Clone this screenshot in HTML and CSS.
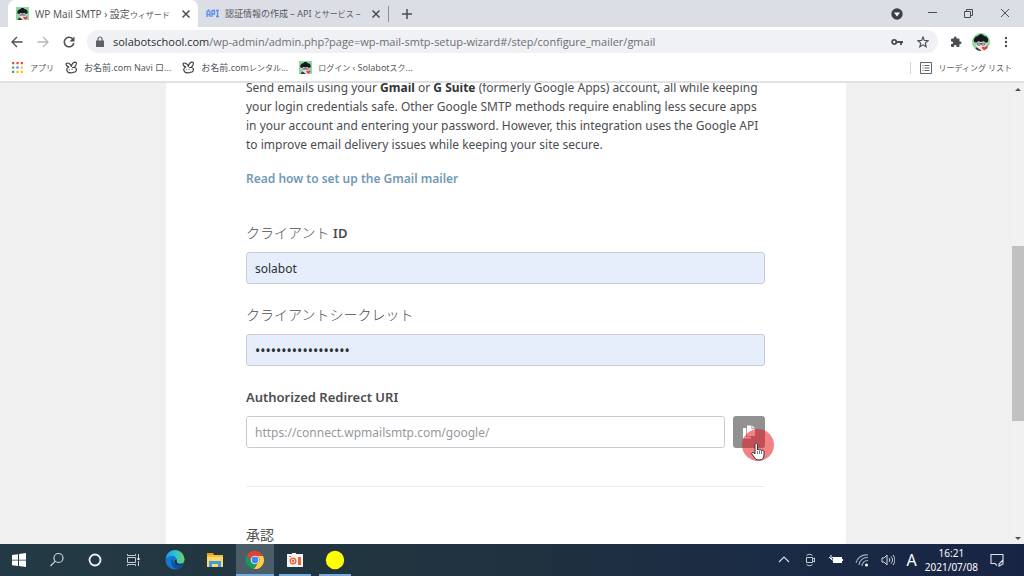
FILE: index.html
```html
<!DOCTYPE html>
<html lang="ja">
<head>
<meta charset="utf-8">
<meta name="viewport" content="width=device-width, initial-scale=1">
<title>WP Mail SMTP › 設定ウィザード</title>
<link rel="stylesheet" href="styles.css">
</head>
<body>
<svg class="defs" aria-hidden="true">
  <symbol id="avatar" viewBox="0 0 24 24">
    <path fill="#8fd6a0" d="M0 0h24v24H0z"/>
    <path fill="#ece7e5" d="M5 10h14v6l-3 4 2 4H6l1-4-2-4z"/>
    <path fill="#151a1c" d="M3 12c-2-4 2-8 5-8 1-3 7-3 8 0 4 0 7 4 5 8l-3 1-2-2-4 1-4-1-2 2z"/>
    <path fill="none" stroke="#444" stroke-width="1" d="M7 13.500h4V16H7zM13 13.500h4V16h-4zM11 14h2"/>
    <path fill="#30383c" d="M3 24l3-5 6 4v1z"/>
    <path fill="#ee3541" d="M14 18l3 1 3-2 1 3-4 4-4-4z"/>
  </symbol>
  <symbol id="rabbit" viewBox="0 0 24 24">
    <path fill="none" stroke="#3c4043" stroke-width="2.200" stroke-linejoin="round" stroke-linecap="round" d="M7 11C2 10 1 5 3 4s7 1 9 6c0-5 4-8 7-8s3 5-2 10c4 0 5 4 3 7s-4 1-5 2-8 2-10-1c-3-3-2-7 2-9z"/>
    <path fill="none" stroke="#3c4043" stroke-width="2" stroke-linecap="round" d="M8 16h.1M13 15h.1M16 12l-2 0"/>
  </symbol>
  <symbol id="cross" viewBox="0 0 10 10">
    <path fill="none" stroke="currentColor" stroke-width="1.500" d="M1.500 1.500l7 7M8.500 1.500l-7 7"/>
  </symbol>
</svg>

<header class="browser">
  <div class="tabs">
    <div class="tab tab-active">
      <svg class="favicon"><use href="#avatar"/></svg>
      <span class="tab-title">WP Mail SMTP › 設定<span class="kana">ウィザード</span></span>
      <button class="icon-btn" aria-label="タブを閉じる"><svg class="close"><use href="#cross"/></svg></button>
    </div>
    <div class="tab tab-idle">
      <svg class="favicon" viewBox="0 0 13 13"><path fill="none" stroke="#5b8def" stroke-width="1.300" d="M1 10V5l1.500-2L4 5v5M1 7.500h3M6 10V3.500h2.500v3.500H6M10 3.500h3M11.500 3.500v6M10 9.500h3"/></svg>
      <span class="tab-title small">認証情報の作成 – API <span class="kana">とサービス</span> –</span>
      <button class="icon-btn" aria-label="タブを閉じる"><svg class="close"><use href="#cross"/></svg></button>
    </div>
    <span class="tab-divider"></span>
    <button class="icon-btn new-tab" aria-label="新しいタブ"><svg viewBox="0 0 12 12"><path stroke="currentColor" stroke-width="1.500" d="M6 1v10M1 6h10"/></svg></button>
    <div class="window-controls">
      <button class="icon-btn" aria-label="タブを検索"><svg viewBox="0 0 12 12"><circle cx="6" cy="6" r="5.700" fill="#3c4043"/><path fill="#fff" d="M3 4.500h6L6 8.500z"/></svg></button>
      <button class="icon-btn" aria-label="最小化"><svg viewBox="0 0 12 12"><path stroke="currentColor" d="M1 4.500h9"/></svg></button>
      <button class="icon-btn" aria-label="元に戻す"><svg viewBox="0 0 12 12"><path fill="none" stroke="currentColor" d="M1.500 3.500h6v6h-6zM3.500 3.500v-2h6v6h-2"/></svg></button>
      <button class="icon-btn" aria-label="閉じる"><svg viewBox="0 0 12 12"><path stroke="currentColor" d="M2 1l8 8M10 1l-8 8"/></svg></button>
    </div>
  </div>

  <div class="toolbar">
    <div class="nav-buttons">
      <button class="icon-btn" aria-label="戻る"><svg viewBox="0 0 12 12"><path fill="none" stroke="currentColor" stroke-width="1.300" d="M11.500 6H1.500M6 1L1 6l5 5"/></svg></button>
      <button class="icon-btn pale" aria-label="進む"><svg viewBox="0 0 12 12"><path fill="none" stroke="currentColor" stroke-width="1.300" d="M.5 6h10M6 1l5 5-5 5"/></svg></button>
      <button class="icon-btn" aria-label="再読み込み"><svg viewBox="0 0 12 12"><path fill="none" stroke="currentColor" stroke-width="1.500" d="M10 3.200A4.800 4.800 0 1 0 10.800 7"/><path fill="currentColor" d="M11.500.5v5h-5z"/></svg></button>
    </div>
    <div class="omnibox">
      <svg class="lock" viewBox="0 0 10 12"><path fill="#5f6368" d="M1 4.500h8V11H1z"/><path fill="none" stroke="#5f6368" stroke-width="1.200" d="M3 5V3a2 2 0 0 1 4 0v2"/></svg>
      <span class="url"><span class="host">solabotschool.com</span>/wp-admin/admin.php?page=wp-mail-smtp-setup-wizard#/step/configure_mailer/gmail</span>
      <button class="icon-btn" aria-label="パスワード"><svg viewBox="0 0 12 12"><circle cx="3.200" cy="6" r="2.100" fill="none" stroke="currentColor" stroke-width="1.800"/><path fill="none" stroke="currentColor" stroke-width="1.800" d="M5.500 6H12M10 6v3"/></svg></button>
      <button class="icon-btn" aria-label="ブックマーク"><svg viewBox="0 0 12 12"><path fill="none" stroke="currentColor" stroke-width="1.100" d="M6 1l1.400 3.400 3.800.3-2.900 2.400.9 3.700L6 8.800l-3.200 2 .9-3.700L.8 4.700l3.800-.3z"/></svg></button>
    </div>
    <button class="icon-btn" aria-label="拡張機能"><svg viewBox="0 0 24 24"><path fill="currentColor" d="M20.500 11H19V7a2 2 0 0 0-2-2h-4V3.500a2.500 2.500 0 0 0-5 0V5H4a2 2 0 0 0-2 2v3.800h1.500a2.700 2.700 0 0 1 0 5.400H2V20a2 2 0 0 0 2 2h3.800v-1.500a2.700 2.700 0 0 1 5.400 0V22H17a2 2 0 0 0 2-2v-4h1.500a2.500 2.500 0 0 0 0-5z"/></svg></button>
    <button class="icon-btn profile" aria-label="プロフィール"><svg><use href="#avatar"/></svg></button>
    <button class="icon-btn" aria-label="メニュー"><svg viewBox="0 0 12 12"><g fill="currentColor"><circle cx="6" cy="2" r="1.200"/><circle cx="6" cy="6" r="1.200"/><circle cx="6" cy="10" r="1.200"/></g></svg></button>
  </div>

  <nav class="bookmarks">
    <a class="bookmark kana" href="#"><svg viewBox="0 0 12 12"><path fill="#ea4335" d="M1 1h2v2H1zM5 1h2v2H5zM9 1h2v2H9z"/><path fill="#34a853" d="M1 5h2v2H1zM1 9h2v2H1z"/><path fill="#4285f4" d="M5 5h2v2H5z"/><path fill="#fbbc04" d="M9 5h2v2H9zM5 9h2v2H5zM9 9h2v2H9z"/></svg>アプリ</a>
    <a class="bookmark" href="#"><svg><use href="#rabbit"/></svg><span>お名前.com Navi ロ...</span></a>
    <a class="bookmark" href="#"><svg><use href="#rabbit"/></svg><span>お名前.com<span class="kana">レンタル</span>...</span></a>
    <a class="bookmark" href="#"><svg><use href="#avatar"/></svg><span><span class="kana">ログイン</span> ‹ Solabot<span class="kana">スク</span>...</span></a>
    <a class="bookmark reading kana" href="#"><svg viewBox="0 0 12 12"><path fill="none" stroke="#5f6368" d="M.5.500h11v11H.5zM2.500 3.500h1M2.500 6h1M2.500 8.500h1M4.500 3.500h5M4.500 6h5M4.500 8.500h5"/></svg>リーディング リスト</a>
  </nav>
</header>

<div class="viewport">
  <main class="page">
    <form class="card">
      <p class="intro">Send emails using your <strong>Gmail</strong> or <strong>G Suite</strong> (formerly Google Apps) account, all while keeping<br>your login credentials safe. Other Google SMTP methods require enabling less secure apps<br>in your account and entering your password. However, this integration uses the Google API<br>to improve email delivery issues while keeping your site secure.</p>
      <a class="doc-link" href="#">Read how to set up the Gmail mailer</a>
      <div class="field">
        <label for="client-id">クライアント <b>ID</b></label>
        <input class="filled" id="client-id" type="text" value="solabot">
      </div>
      <div class="field">
        <label for="client-secret">クライアントシークレット</label>
        <input class="filled" id="client-secret" type="password" value="abcdefghijklmnopqr">
      </div>
      <div class="field">
        <label for="redirect-uri"><b>Authorized Redirect URI</b></label>
        <div class="copy-row">
          <input id="redirect-uri" type="text" readonly value="https://connect.wpmailsmtp.com/google/">
          <button class="copy" type="button" aria-label="Copy">
            <svg class="copy-icon" viewBox="0 0 14 14"><path fill="#fff" d="M5 .5h4.500V4H13v7H5z"/><path fill="#fff" d="M10.300.5L13 3.200h-2.700zM1 3h3.200v8.800H9v1.700H1z"/></svg>
            <span class="click-spot"></span>
            <svg class="pointer" viewBox="0 0 14 18"><path fill="#fff" stroke="#333" d="M4 11V2c0-2 2.500-2 2.500 0v5c.5-1 2-.8 2 .3.500-1 2-.7 2 .4.600-.8 2.500-.4 2.500 1V12c0 3-1.500 5-5 5-3 0-4-1.500-5-3L.8 11C.3 9.500 2 9 3 10z"/><path stroke="#555" stroke-width=".8" d="M6.500 8v3M8.500 8v3M10.500 8v3"/></svg>
          </button>
        </div>
      </div>
      <hr>
      <h2>承認</h2>
    </form>
  </main>
  <div class="scrollbar" aria-hidden="true">
    <svg viewBox="0 0 12 12"><path fill="#505050" d="M3 8l3-3 3 3z"/></svg>
    <span class="thumb"></span>
    <svg viewBox="0 0 12 12"><path fill="#505050" d="M3 5l3 3 3-3z"/></svg>
  </div>
</div>

<footer class="taskbar">
  <div class="system-tasks">
    <button class="task" aria-label="スタート"><svg viewBox="0 0 20 20"><path fill="#fff" d="M3 5l6-.8v5.500H3zM10 4l7-1v6.700h-7zM3 10.500h6V16l-6-.8zM10 10.500h7V17l-7-1z"/></svg></button>
    <button class="task" aria-label="検索"><svg viewBox="0 0 20 20"><circle cx="11.500" cy="8" r="4.500" fill="none" stroke="#cfd6da" stroke-width="1.200"/><path stroke="#cfd6da" stroke-width="1.200" d="M8.300 11.200L3.500 16"/></svg></button>
    <button class="task" aria-label="Cortana"><svg viewBox="0 0 20 20"><circle cx="10" cy="10" r="5.500" fill="none" stroke="#f2f4f5" stroke-width="1.800"/></svg></button>
    <button class="task" aria-label="タスク ビュー"><svg viewBox="0 0 20 20"><path fill="none" stroke="#c5cdd1" d="M4.500 7.500h8v5h-8zM4.500 4v1.500h8V4M4.500 16v-1.500h8V16M15.500 4v4M15.500 11v5"/><path fill="#fff" d="M14.500 8h2v2h-2z"/></svg></button>
  </div>
  <div class="app-tasks">
    <button class="task" aria-label="Edge"><svg viewBox="0 0 20 20">
      <defs><linearGradient id="edge-top" x1="0" x2="1"><stop offset="0" stop-color="#2196e0"/><stop offset=".55" stop-color="#35bfd5"/><stop offset="1" stop-color="#6bd84c"/></linearGradient></defs>
      <circle cx="10" cy="10" r="9.500" fill="#1578cc"/>
      <path fill="url(#edge-top)" d="M.6 9C2-3 18-3 19.500 9c.2 4-3.500 5.500-7.500 4-1-.5 0-1 0-2.500C12 7 9 5.500 6 6 3 6.300 1.200 8 .6 9z"/>
      <path fill="#0d509c" d="M7.500 8.500C5 12 7 18 12 19c3-.3 5-2 6.300-4.300C13 17 7 14 7.500 8.500z"/>
      <path fill="#20333f" d="M11.800 11c-1 1.500 2 4 7.200 2.500l-.8 1.300C14 16.500 9 14.500 9.500 11c.2-1.500 2.500-1.500 2.300 0z"/></svg></button>
    <button class="task" aria-label="エクスプローラー"><svg viewBox="0 0 20 20"><path fill="#e5a21b" d="M2 3h6l1 2H2z"/><path fill="#ffd76a" d="M2 5h16v12H2z"/><path fill="#f6bd3b" d="M2 5h16v2H2z"/><path fill="#3e9ddd" d="M4 17v-6h12v6h-3v-3H7v3z"/></svg></button>
    <button class="task running current" aria-label="Chrome"><svg viewBox="0 0 20 20"><path fill="#db4437" d="M2 5.500A9 9 0 0 1 18 6h-8a4 4 0 0 0-4 5z"/><path fill="#0f9d58" d="M2 5.500l4.500 7A4 4 0 0 0 11 14l-2 5A9 9 0 0 1 2 5.500z"/><path fill="#ffcd40" d="M18 6a9 9 0 0 1-9 13l4-6a4 4 0 0 0-1-7z"/><circle cx="10" cy="10" r="4.300" fill="#fff"/><circle cx="10" cy="10" r="3.400" fill="#4285f4"/></svg></button>
    <button class="task running" aria-label="画面録画"><svg viewBox="0 0 20 20"><path fill="#f4f4f4" d="M2 4h5V3h4v1h7v13H2z"/><circle cx="8" cy="11" r="2.800" fill="none" stroke="#e56a38" stroke-width="1.400"/><circle cx="8" cy="11" r="1.200" fill="#e56a38"/><path fill="#e56a38" d="M13 7h3v8h-3zM4 6h2v1H4z"/></svg></button>
    <button class="task running" aria-label="ポインター"><svg viewBox="0 0 20 20"><circle cx="10" cy="10" r="9.200" fill="#ff0"/></svg></button>
  </div>

  <div class="tray">
    <svg viewBox="0 0 14 14"><path fill="none" stroke="#d5dae2" stroke-width="1.200" d="M2 9l5-5 5 5"/></svg>
    <svg viewBox="0 0 14 14"><path fill="none" stroke="#c6ccd5" d="M3.500 4.500h6v5h-6zM9.500 6l2-1v4l-2-1M3.500 2.500C5 1 8 1 9.500 2.500M3.500 11.500c1.500 1.500 4.500 1.500 6 0"/></svg>
    <svg viewBox="0 0 14 14"><path fill="#fff" d="M4 4h9v6H4zM13 6h1v2h-1z"/><path fill="none" stroke="#fff" d="M0 4l2 2 2-2M2 2v4l3 2"/></svg>
    <svg viewBox="0 0 14 14"><path fill="none" stroke="#aab2bf" stroke-width="1.100" d="M1 10C2 5 7 1 13 2M4 12c0-4 4-8 9-7.500M7 13c0-3 3-6 6-5.500"/><circle cx="11.500" cy="12" r="1.500" fill="#fff"/></svg>
    <svg viewBox="0 0 14 14"><path fill="none" stroke="#d5dae2" d="M1 5h2l3-3v10L3 9H1zM8 5c1 1 1 3 0 4M10 3.500c2 2 2 5 0 7M12 2c2.500 3 2.500 7 0 10"/></svg>
    <div class="status">
      <span class="ime">A</span>
      <div class="clock"><time>16:21</time><time>2021/07/08</time></div>
    </div>
    <svg viewBox="0 0 14 14"><path fill="none" stroke="#e0e4ea" stroke-width="1.100" d="M13 7V1.500H1v9h4l2 2M13 7l-4 4v2l4-2z"/></svg>
  </div>
</footer>
</body>
</html>
```
FILE: styles.css
```css
* { box-sizing: border-box; }

body {
  margin: 0;
  height: 100vh;
  display: flex;
  flex-direction: column;
  overflow: hidden;
  background: #fff;
  color: #4b4d4f;
  font-family: "Noto Sans", "Noto Sans CJK JP", sans-serif;
  font-size: 12px;
}

button, input { font: inherit; }
svg { display: block; flex: none; }
a { text-decoration: none; }
.defs { position: absolute; width: 0; height: 0; }

.icon-btn {
  flex: none;
  display: grid;
  place-items: center;
  padding: 0;
  border: 0;
  background: none;
  color: #4a4d51;
}
.icon-btn svg { width: 12px; height: 12px; }
.icon-btn .close { width: 10px; height: 10px; }
.icon-btn.pale { color: #b5b7ba; }

/* Browser frame */
.browser {
  flex: none;
  border-bottom: 2px solid #dfe1e4;
  color: #55585c;
  font-size: 10px;
}
.small { font-size: 9px; }
.kana { font-size: 8px; }

.tabs {
  display: flex;
  align-items: center;
  height: 27px;
  padding-left: 8px;
  background: #dcdee6;
}
.tab {
  display: flex;
  align-items: center;
  gap: 6px;
  height: 27px;
  width: 190px;
  padding: 0 7px 0 8px;
}
.tab-active { background: #fff; border-radius: 7px 7px 0 0; }
.favicon { width: 13px; height: 13px; }
.tab-title { flex: 1; min-width: 0; white-space: nowrap; }
.tab-divider { width: 1px; height: 16px; background: #8d9096; }
.new-tab { margin-left: 12px; }
.window-controls { display: flex; gap: 24px; margin-left: auto; padding-right: 13px; }

.toolbar {
  display: flex;
  align-items: center;
  gap: 12px;
  height: 29px;
  padding: 0 12px 0 11px;
}
.nav-buttons { display: flex; gap: 14px; }
.omnibox {
  flex: 1;
  min-width: 0;
  display: flex;
  align-items: center;
  gap: 14px;
  height: 23px;
  padding: 0 9px 0 8px;
  border-radius: 12px;
  background: #f0f1f4;
  font-family: "Open Sans", "Noto Sans", sans-serif;
  font-size: 11px;
}
.lock { width: 10px; height: 12px; margin-right: -6px; }
.url { flex: 1; min-width: 0; white-space: nowrap; color: #6b6e72; }
.host { color: #2c2f33; }
.toolbar .profile svg { width: 18px; height: 18px; border-radius: 50%; }
.toolbar .profile { margin: 0 -2px; }

.bookmarks {
  display: flex;
  align-items: center;
  gap: 11px;
  height: 25px;
  padding: 0 12px 2px 11px;
}
.bookmark {
  display: flex;
  align-items: center;
  gap: 6px;
  color: #55585c;
  font-size: 9px;
  white-space: nowrap;
}
.bookmark.kana { font-size: 8px; }
.bookmark svg { width: 13px; height: 13px; }
.reading { margin-left: auto; padding-left: 9px; border-left: 1px solid #d5d7da; }
.reading svg { width: 12px; height: 12px; }

/* Web page */
.viewport { flex: 1; min-height: 0; display: flex; }
.page {
  flex: 1;
  min-width: 0;
  overflow: hidden;
  background: #f0f0f0;
}
.card {
  width: 68%;
  max-width: 680px;
  margin: -5px auto 0;
  padding: 0 81px 40px 80px;
  background: #fff;
}
.intro { margin: 0 0 15px; line-height: 19px; white-space: nowrap; }
.intro strong { color: #333537; }
.doc-link { display: block; color: #7299b6; font-weight: 600; line-height: 20px; }
.field { margin-top: 21px; }
.doc-link + .field { margin-top: 34px; }
.field label {
  display: block;
  height: 20px;
  margin-bottom: 9px;
  font-size: 14px;
  font-weight: 300;
  line-height: 20px;
}
.field b { font-weight: 600; font-size: 13px; }
.field input {
  display: block;
  width: 100%;
  height: 32px;
  padding: 0 8px;
  border: 1px solid #c8ccd2;
  border-radius: 3px;
  background: #fff;
  color: #96989b;
}
.field .filled { background: #e6eefb; color: #2c2f33; }
.field input[type="password"] { font-size: 14px; }
.copy-row { display: flex; gap: 8px; }
.copy-row input { flex: 1; min-width: 0; }
.copy {
  position: relative;
  flex: none;
  display: grid;
  place-items: center;
  width: 32px;
  height: 32px;
  padding: 0;
  border: 0;
  border-radius: 3px;
  background: #919191;
}
.copy-icon { width: 14px; height: 14px; }
.click-spot {
  position: absolute;
  left: 9px;
  top: 13px;
  width: 32px;
  height: 32px;
  border-radius: 50%;
  background: rgba(232, 28, 38, .55);
}
.pointer { position: absolute; left: 18px; top: 27px; width: 14px; height: 18px; }
hr { margin: 38px 0; border: 0; border-top: 1px solid #ececec; }
h2 { margin: 0; font-size: 14px; font-weight: 400; line-height: 20px; }

.scrollbar {
  flex: none;
  display: flex;
  flex-direction: column;
  justify-content: space-between;
  width: 12px;
  background: #f1f1f1;
}
.scrollbar svg { width: 12px; height: 12px; }
.thumb { height: 38%; margin-top: 40px; background: #c1c1c1; }

/* Desktop taskbar */
.taskbar {
  flex: none;
  display: flex;
  gap: 3px;
  height: 32px;
  background: linear-gradient(90deg, #233a44, #20323f 50%, #1a2b45 75%, #182444);
  color: #fff;
}
.system-tasks, .app-tasks { display: flex; }
.task {
  display: grid;
  place-items: center;
  width: 38px;
  padding: 0;
  border: 0 solid transparent;
  border-width: 2px 0;
  background: none;
}
.app-tasks .task { width: 40px; }
.task svg { width: 20px; height: 20px; }
.app-tasks .running { width: 32px; margin: 0 4px; border-bottom-color: #76a9dc; }
.app-tasks .current { width: 38px; margin: 0 1px; background: #4b5e68; border-top-color: #4b5e68; }
.tray {
  display: flex;
  align-items: center;
  gap: 12px;
  margin-left: auto;
  padding-right: 20px;
}
.tray svg { width: 14px; height: 14px; }
.status { display: flex; align-items: center; gap: 8px; }
.ime { font-size: 16px; line-height: 20px; }
.clock {
  display: flex;
  flex-direction: column;
  align-items: center;
  font-size: 10px;
  line-height: 14px;
}
```
